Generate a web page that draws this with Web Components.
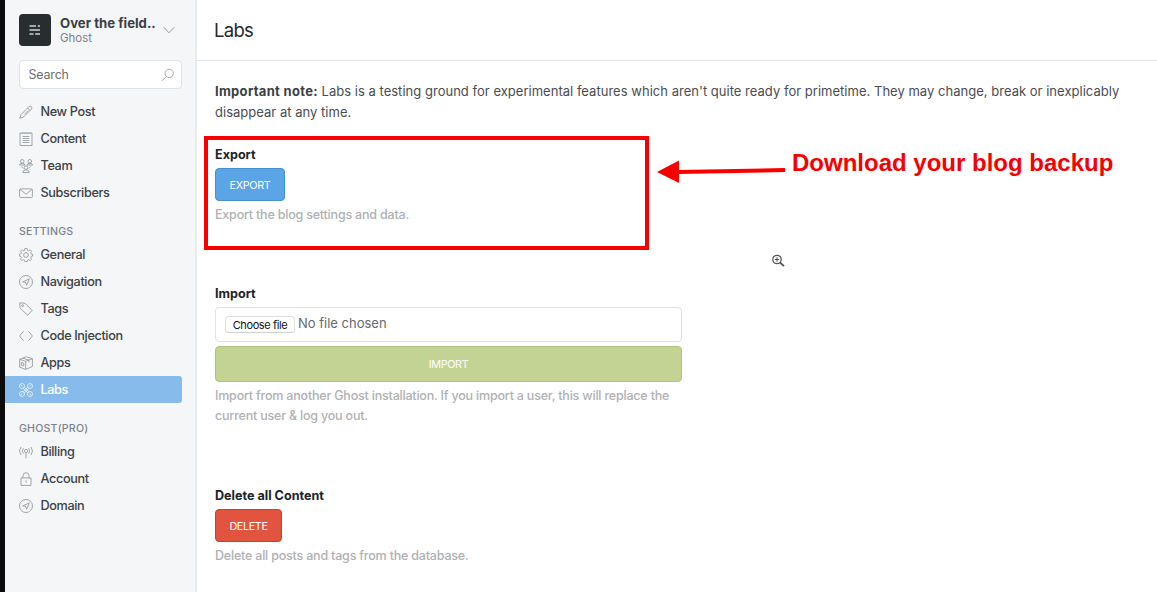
<!DOCTYPE html>
<html lang="en">
<head>
<meta charset="utf-8">
<title>Labs</title>
<style>
html,body{margin:0;height:100%;overflow:hidden;background:#fff}
body{font-family:Inter,"Liberation Sans",sans-serif;-webkit-font-smoothing:antialiased}
</style>
</head>
<body>
<labs-app></labs-app>
<script>
const define=(name,html,setup)=>customElements.define(name,class extends HTMLElement{
  constructor(){
    super();
    const t=document.createElement('template');
    t.innerHTML=html;
    this.attachShadow({mode:'open'}).append(t.content.cloneNode(true));
  }
  connectedCallback(){ if(setup) setup(this,this.shadowRoot); }
});

const ICONS={
  pen:'<path d="M.8 13.2 2 9.6 9.8 1.8q1.2-1.4 2.6-.2 1.200 1.300-.1 2.600L4.400 12.100zM8.600 3l2.500 2.500M5.500 9.300l3.600-3.600"/>',
  content:'<path d="M1 1h12v12.500H1zM3 .5v1.500M5 .5v1.500M7 .5v1.500M9 .5v1.500M11 .5v1.500M3.700 4.500h6.600M3.700 6.500h6.600M3.700 8.500h6.600M3.700 10.500h6.600"/>',
  team:'<circle cx="3.200" cy="2.300" r="1.800"/><circle cx="10.800" cy="2.300" r="1.800"/><circle cx="7" cy="8.600" r="1.800"/><path d="M.4 6q.3-1.700 2.800-1.700T6 6zM8 6q.3-1.700 2.800-1.700T13.600 6zM3.800 13.500q.2-2.700 3.200-2.700t3.200 2.700zM2.300 7.500l2 2M11.700 7.500l-2 2"/>',
  mail:'<rect x=".6" y="2.900" width="12.800" height="8.600" rx="1"/><path d="m1.200 3.500 5.800 4.700 5.800-4.700"/>',
  gear:'<circle cx="7" cy="7" r="2.400"/><path d="M5.800.6h2.400l.3 1.700 1.200.5 1.400-1 1.500 1.500-1 1.400.5 1.200 1.500.3v1.900l-1.500.4-.5 1.200 1 1.400-1.500 1.500-1.400-1-1.200.5-.3 1.500H5.800l-.3-1.500-1.200-.5-1.400 1-1.500-1.500 1-1.400-.5-1.200L.5 8.100V6.200l1.400-.3.5-1.200-1-1.400 1.500-1.500 1.400 1 1.200-.5z"/>',
  compass:'<circle cx="7" cy="7" r="6.500"/><path d="M10.400 3.900 7.600 10.300 6.900 7.500 3.700 6.900z"/>',
  tag:'<path d="M.7.900 6 1.200l7.200 7.300-4.600 4.700L1 5.900z"/><circle cx="3.600" cy="3.700" r="1"/>',
  code:'<path d="M4.600 2.200.6 7l4 4.800M9.400 2.200l4 4.800-4 4.800"/>',
  box:'<path d="M.6 3.300 7.300.7l6.100 2v7.800l-6.700 2.900L.6 11.200zM.6 3.300l6.100 2 6.700-2.600M6.700 5.300v8.100M3.800 2.100l6.100 2v2.300M2.300 6.500l2.500.8v2.500L2.300 9z"/>',
  labs:'<circle cx="3" cy="3" r="2.500"/><circle cx="11" cy="3" r="2.500"/><circle cx="3" cy="11" r="2.500"/><circle cx="11" cy="11" r="2.500"/><path d="m4 5.200 4.800 4.800M5.200 4 10 8.800M9.900 5.200 5.200 10M8.800 4 4 8.800M1.500 1.500l2 2M12.500 1.500l-2 2M1.500 12.500l2-2M12.500 12.500l-2-2"/>',
  signal:'<circle cx="7" cy="6" r="1.600"/><path d="M7 7.600v5.800M4.400 3.200q-2 2.800 0 5.600M9.600 3.200q2 2.800 0 5.600M2 1.900q-3 4.100 0 8.200M12 1.900q3 4.100 0 8.200"/>',
  lock:'<path d="M2 5.900h10v7.500H2zM4 5.900V3.600q.3-2.900 3-2.900t3 2.900v2.300M7 8.400v2.300"/>',
  search:'<circle cx="8.200" cy="5.400" r="4.200"/><path d="m5.200 8.500-4.300 4.400"/>',
  chevron:'<path d="m1.700 4.200 5.300 5.600 5.300-5.600"/>'
};

define('line-icon',`<style>
:host{display:block;width:14px;height:14px;flex:none}
svg{display:block;width:100%;height:100%;fill:none;stroke:currentColor;stroke-width:.85;overflow:visible}
</style><svg viewBox="0 0 14 14"></svg>`,(el,r)=>{r.querySelector('svg').innerHTML=ICONS[el.getAttribute('name')];});

define('nav-item',`<style>
:host{display:flex;align-items:center;height:27px;padding-left:14px;gap:7.500px;box-sizing:border-box;width:176.500px;font-size:12.700px;font-weight:450;letter-spacing:-.38px;color:#3d4145;border-radius:0 3px 3px 0}
line-icon{color:#92979a}
:host([active]){background:#87bbeb;color:#fff;font-weight:500}
:host([active]) line-icon{color:#e4f1fc}
span{white-space:nowrap}
</style><line-icon></line-icon><span><slot></slot></span>`,(el,r)=>{
  const old=r.querySelector('line-icon'),i=document.createElement('line-icon');
  i.setAttribute('name',el.getAttribute('icon'));old.replaceWith(i);
});

define('nav-heading',`<style>
:host{display:flex;align-items:center;height:20px;margin-top:15px;padding-left:14px;font-size:10.600px;font-weight:500;color:#7e8388;letter-spacing:.2px}
</style><slot></slot>`);

define('blog-menu',`<style>
:host{display:flex;align-items:center;height:32px;padding:14px 0 0 14px}
.logo{width:32px;height:32px;border-radius:4px;background:#282d30;display:grid;place-items:center;margin-right:9px}
.logo svg{display:block}
.t{width:97px;white-space:nowrap}
b{display:block;font-size:13.200px;line-height:16px;font-weight:650;color:#3a3f43;letter-spacing:0}
small{display:block;font-size:11.500px;line-height:14px;color:#7c8388;letter-spacing:-.05px}
line-icon{color:#85898d;margin-left:5px}
</style><div class="logo"><svg width="12" height="12" viewBox="0 0 12 12" fill="#a4a8aa"><path d="M.5 1h6.500v2H.5zM8.800 1H11v2H8.800zM.5 5H11v2H.5zM.5 9h4v2h-4zM6.200 9H11v2H6.200z"/></svg></div>
<div class="t"><b>Over the field..</b><small>Ghost</small></div><line-icon name="chevron"></line-icon>`);

define('search-box',`<style>
:host{display:flex;align-items:center;justify-content:space-between;box-sizing:border-box;height:29px;width:162.500px;margin:14px 0 9px 14px;padding:0 6px 0 8.500px;border:1px solid #dfe3e6;border-radius:4px;background:#fff;font-size:12.500px;letter-spacing:-.2px;color:#6c7073}
line-icon{color:#999ea1}
</style><span>Search</span><line-icon name="search"></line-icon>`);

define('side-bar',`<style>
:host{display:block;box-sizing:border-box;width:197px;flex:none;background:#f4f6f8;border-left:5px solid #0c0c0c;border-right:2px solid #e9ecee}
</style>
<blog-menu></blog-menu><search-box></search-box>
<nav>
<nav-item icon="pen">New Post</nav-item>
<nav-item icon="content">Content</nav-item>
<nav-item icon="team">Team</nav-item>
<nav-item icon="mail">Subscribers</nav-item>
<nav-heading>SETTINGS</nav-heading>
<nav-item icon="gear">General</nav-item>
<nav-item icon="compass">Navigation</nav-item>
<nav-item icon="tag">Tags</nav-item>
<nav-item icon="code">Code Injection</nav-item>
<nav-item icon="box">Apps</nav-item>
<nav-item icon="labs" active>Labs</nav-item>
<nav-heading>GHOST(PRO)</nav-heading>
<nav-item icon="signal">Billing</nav-item>
<nav-item icon="lock">Account</nav-item>
<nav-item icon="compass">Domain</nav-item>
</nav>`);

define('action-button',`<style>
:host{display:flex;box-sizing:border-box;align-items:center;justify-content:center;width:var(--w,100%);height:var(--h,33px);border:1px solid var(--edge);border-radius:4px;background:var(--fill);color:#fff;font-size:10.800px;letter-spacing:-.35px;padding-top:var(--pt,1px)}
</style><slot></slot>`);

define('form-section',`<style>
:host{display:block;width:467px;box-sizing:border-box}
h3{margin:0;font-size:12.600px;line-height:20px;font-weight:650;color:#202427;letter-spacing:0;margin-bottom:3px}
p{margin:4px 0 0;font-size:12.500px;line-height:20px;color:#afb1b3;font-weight:450;letter-spacing:-.2px;white-space:nowrap}
</style><h3><slot name="title"></slot></h3><slot></slot><p><slot name="help"></slot></p>`);

define('file-field',`<style>
:host{display:flex;box-sizing:border-box;height:35px;margin-bottom:4px;border:1px solid #dfe2e4;border-radius:4px;padding:8px 9px;gap:3px;font-size:13px;color:#66696c}
.b{box-sizing:border-box;height:17px;width:70px;border:1px solid #dddfe0;border-bottom-color:#cfd1d2;border-radius:4px;font-size:11px;line-height:16px;text-align:center;color:#111;white-space:nowrap;letter-spacing:-.38px}
.n{line-height:15px;letter-spacing:0}
</style><span class="b">Choose file</span><span class="n">No file chosen</span>`);

define('callout-layer',`<style>
:host{position:absolute;inset:0;pointer-events:none}
.box{position:absolute;left:204px;top:136px;width:445px;height:114px;box-sizing:border-box;border:4px solid #f80000}
svg{position:absolute;left:0;top:0}
.say{position:absolute;left:792px;top:148px;font:bold 24px/30px "Liberation Sans",sans-serif;color:#f80000;white-space:nowrap}
</style><div class="box"></div>
<svg width="1157" height="592"><path d="M678 172 785 170" stroke="#f80000" stroke-width="4"/><path d="M657 172 679 160.500V183z" fill="#f80000"/>
<g fill="none" stroke="#555" stroke-width="1.300"><circle cx="777" cy="259.500" r="4.200"/><path d="M774.800 259.500h4.400M777 257.300v4.400" stroke-width="1.100"/><path d="m780 262.500 4 3.700" stroke-width="1.800"/></g></svg>
<div class="say">Download your blog backup</div>`);

define('labs-page',`<style>
:host{display:block;flex:1;min-width:0}
header{height:60px;border-bottom:1px solid #e1e4e6;box-sizing:content-box;padding-left:17px;display:flex;align-items:center;font-size:18.500px;color:#26292c;letter-spacing:-.7px}
main{padding:20px 0 0 18px}
.note{font-size:13px;line-height:21px;color:#4a4d50;margin:0;white-space:nowrap;letter-spacing:.022px}
.note b{font-weight:650;color:#3c3f42;letter-spacing:.3px}
</style>
<header>Labs</header>
<main>
<p class="note"><b>Important note:</b> <span>Labs is a testing ground for experimental features which aren't quite ready for primetime. They may change, break or inexplicably</span><br><span class="l2">disappear at any time.</span></p>
<form-section style="margin-top:22px"><span slot="title">Export</span><action-button style="--w:70px;--fill:#5ba4e5;--edge:#4490d3">EXPORT</action-button><span slot="help">Export the blog settings and data.</span></form-section>
<form-section style="margin-top:59px"><span slot="title">Import</span><file-field></file-field><action-button style="--h:36px;--pt:0px;--fill:#c3d393;--edge:#b1c47d">IMPORT</action-button><span slot="help">Import from another Ghost installation. If you import a user, this will replace the<br>current user &amp; log you out.</span></form-section>
<form-section style="margin-top:60px"><span slot="title">Delete all Content</span><action-button style="--w:67px;--fill:#e25440;--edge:#c04431">DELETE</action-button><span slot="help">Delete all posts and tags from the database.</span></form-section>
</main>`);

define('labs-app',`<style>
:host{display:flex;position:relative;width:100%;height:100vh;overflow:hidden}
</style><side-bar></side-bar><labs-page></labs-page><callout-layer></callout-layer>`);
</script>
</body>
</html>
